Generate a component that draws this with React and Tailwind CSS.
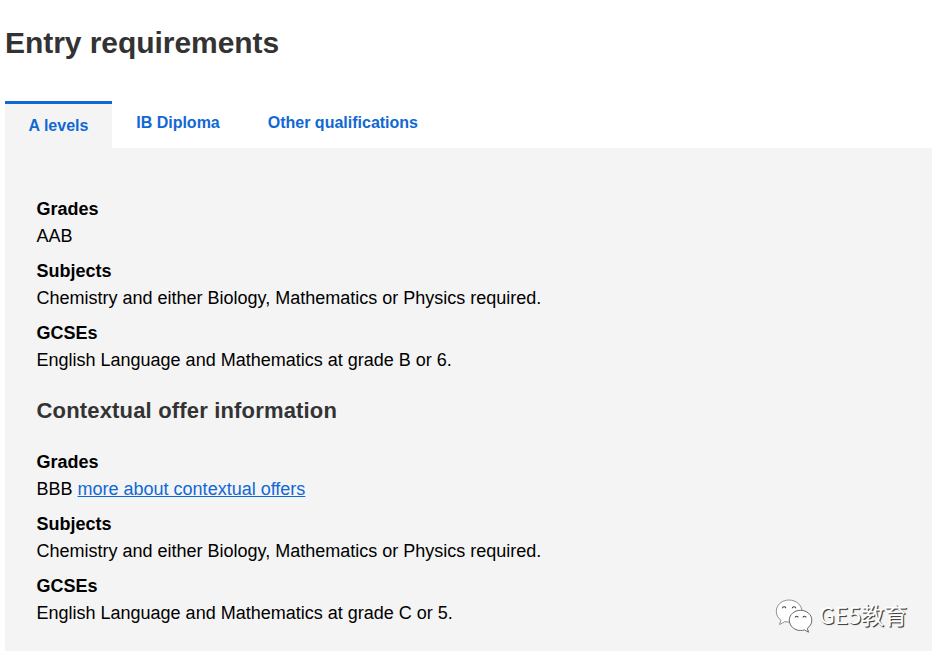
import React, { useState } from 'react';

const tabs = ['A levels', 'IB Diploma', 'Other qualifications'];

const standardOffer = [
  { label: 'Grades', value: 'AAB' },
  { label: 'Subjects', value: 'Chemistry and either Biology, Mathematics or Physics required.' },
  { label: 'GCSEs', value: 'English Language and Mathematics at grade B or 6.' },
];

const contextualOffer = [
  { label: 'Grades', value: 'BBB', link: 'more about contextual offers' },
  { label: 'Subjects', value: 'Chemistry and either Biology, Mathematics or Physics required.' },
  { label: 'GCSEs', value: 'English Language and Mathematics at grade C or 5.' },
];

const RequirementList = ({ items }) => (
  <dl className="space-y-2 text-[18px] leading-[27px] text-black">
    {items.map((item) => (
      <div key={item.label}>
        <dt className="font-bold">{item.label}</dt>
        <dd>
          {item.value}
          {item.link && (
            <>
              {' '}
              <a href="#contextual" className="text-[#1068d4] underline">{item.link}</a>
            </>
          )}
        </dd>
      </div>
    ))}
  </dl>
);

const Watermark = () => (
  <div className="absolute left-[775px] top-[597px] flex items-center">
    <svg width="38" height="36" viewBox="0 0 38 36" fill="#fff" stroke="#444" strokeWidth="0.8">
      <path stroke="#777" d="M14 3C7 3 1.300 7.900 1.300 14.300c0 3.700 1.700 6.700 4.600 8.800L4.500 27.500l5.400-2.900c1.300.3 2.700.5 4.100.5 7.200 0 12.900-4.900 12.900-10.900S21.200 3 14 3Z" />
      <path d="M25.500 13.300c-6.300 0-11.200 4.400-11.200 9.900s4.900 10.300 11.200 10.300c1.400 0 2.700-.2 3.900-.6l4.100 2.300-1.200-3.900c2.600-1.800 4.500-4.500 4.500-8.100 0-5.500-5-9.900-11.300-9.900Z" />
      <g fill="none" strokeWidth="1.1">
        <path d="M7.400 11.300a1.700 1.500 0 0 1 3.400 0" />
        <path d="M17.300 11.300a1.700 1.500 0 0 1 3.400 0" />
        <path d="M20.200 20.500a1.500 1.300 0 0 1 3 0" />
        <path d="M28 20.500a1.500 1.300 0 0 1 3 0" />
      </g>
    </svg>
    <span className="relative -top-px ml-1.5 whitespace-nowrap font-['Noto_Sans_CJK_SC',sans-serif] text-[23px] leading-[36px] text-white [text-shadow:1px_1px_0_#444,1px_1px_1px_#777]">
      GE5教育
    </span>
  </div>
);

const App = () => {
  const [active, setActive] = useState(0);

  return (
    <div className="relative h-[658px] w-[938px] overflow-hidden bg-white pl-[5px] pr-1.5 pt-[25px] font-['Liberation_Sans',Arial,sans-serif]">
      <h1 className="text-[30px] font-bold leading-[36px] tracking-[-0.05px] text-[#333333]">Entry requirements</h1>

      <div className="mt-10 flex h-[47px] items-stretch">
        {tabs.map((tab, index) => (
          <button
            key={tab}
            onClick={() => setActive(index)}
            className={`flex items-start pt-2.5 text-[16px] font-bold leading-6 text-[#1068d4] ${
              index === active ? 'border-t-3 border-[#1068d4] bg-[#f4f4f4] pl-[23.5px] pr-[23.8px]' : 'px-6'
            }`}
          >
            {tab}
          </button>
        ))}
      </div>

      <div className="h-[503px] bg-[#f4f4f4] pl-[31.5px] pr-8 pt-12">
        <RequirementList items={standardOffer} />
        <h2 className="mb-[22px] mt-5 text-[22px] font-bold leading-[33px] tracking-[0.17px] text-[#333333]">
          Contextual offer information
        </h2>
        <RequirementList items={contextualOffer} />
      </div>

      <Watermark />
    </div>
  );
};

export default App;
